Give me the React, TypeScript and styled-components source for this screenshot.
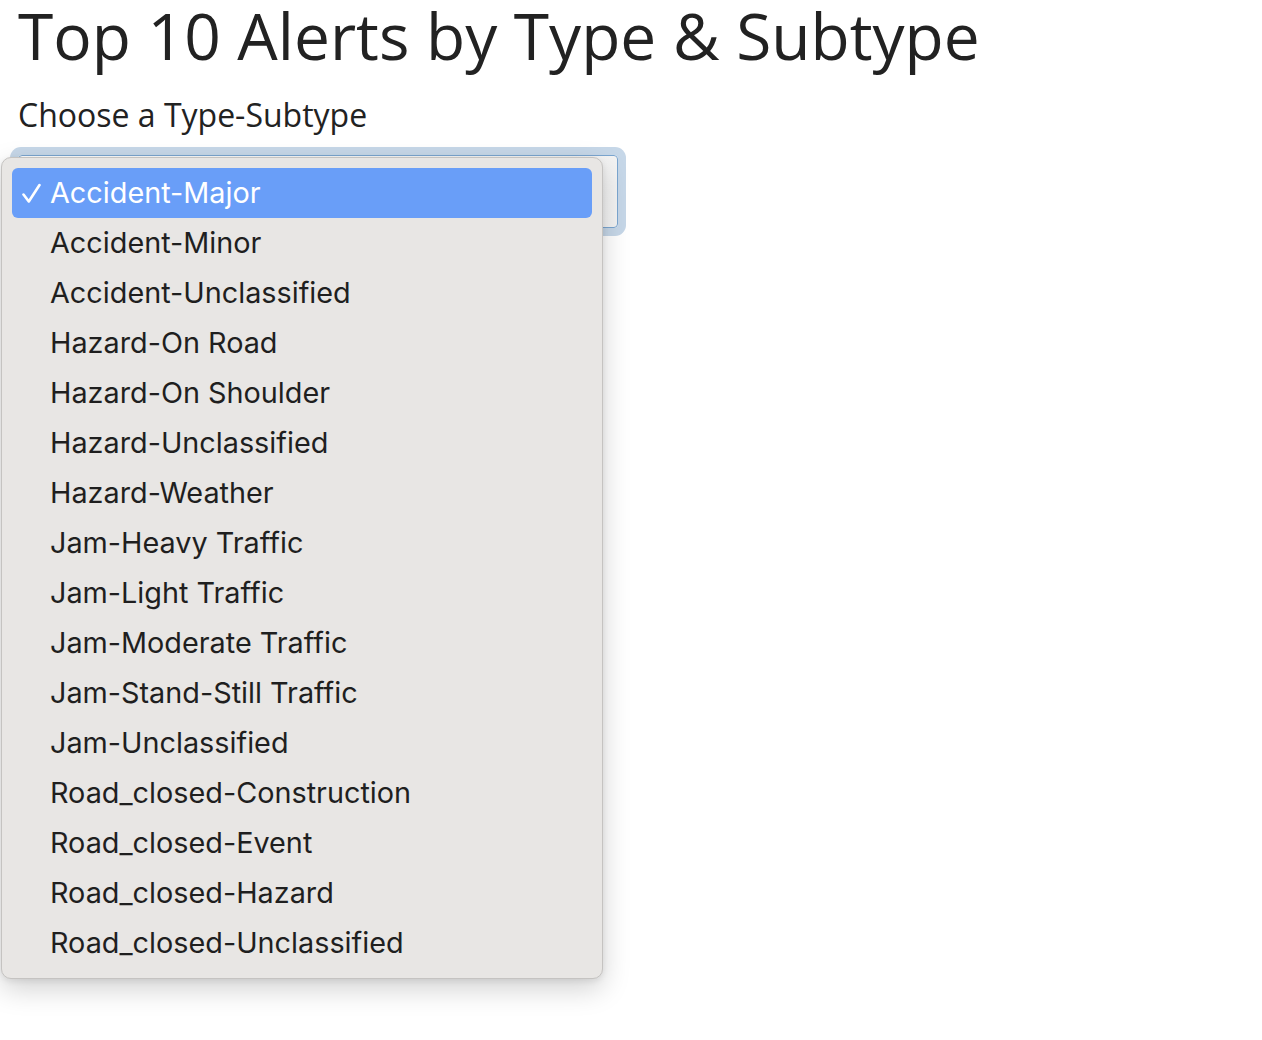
import React from "react";
import styled, { createGlobalStyle } from "styled-components";

const Global = createGlobalStyle`
  html, body { margin: 0; padding: 0; background: #ffffff; }
  html, body, #root { min-height: 100%; }
  body { font-family: "Open Sans", "Noto Sans", sans-serif; color: #222222; }
`;

const Page = styled.div`
  padding-left: 18px;
  min-height: 1040px;
  box-sizing: border-box;
`;

const Title = styled.h1`
  margin: 0;
  font-family: "Open Sans", sans-serif;
  font-weight: 400;
  font-size: 64px;
  line-height: 72px;
  color: #222222;
  white-space: nowrap;
`;

const Label = styled.div`
  margin-top: 23px;
  font-family: "Open Sans", sans-serif;
  font-size: 32px;
  line-height: 40px;
  color: #222222;
`;

const SelectWrap = styled.div`
  position: relative;
  margin-top: 20px;
  width: 600px;
  height: 830px;
`;

const SelectBox = styled.div`
  box-sizing: border-box;
  width: 600px;
  height: 73px;
  border: 1px solid #7ba6d0;
  border-radius: 4px;
  background: linear-gradient(to right, #ffffff, #f3f3f3);
  box-shadow: 0 0 0 8px #c6d7e8;
`;

const Menu = styled.div`
  position: absolute;
  left: -17px;
  top: 2px;
  width: 602px;
  box-sizing: border-box;
  padding: 10px 10px;
  background: #e8e6e4;
  border: 1px solid #c5c3c1;
  border-radius: 10px;
  box-shadow: 0 10px 28px rgba(0, 0, 0, 0.18), 0 2px 6px rgba(0, 0, 0, 0.08);
  font-family: "Inter", "Roboto", sans-serif;
`;

const Item = styled.div<{ $selected?: boolean }>`
  position: relative;
  height: 50px;
  line-height: 50px;
  padding-left: 38px;
  border-radius: 6px;
  font-size: 28.8px;
  color: ${(p) => (p.$selected ? "#ffffff" : "#1f1f1f")};
  background: ${(p) => (p.$selected ? "#699ef8" : "transparent")};
  white-space: nowrap;
`;

const Check = styled.svg`
  position: absolute;
  left: 10px;
  top: 15px;
  width: 19px;
  height: 21px;
`;

const options = [
  "Accident-Major",
  "Accident-Minor",
  "Accident-Unclassified",
  "Hazard-On Road",
  "Hazard-On Shoulder",
  "Hazard-Unclassified",
  "Hazard-Weather",
  "Jam-Heavy Traffic",
  "Jam-Light Traffic",
  "Jam-Moderate Traffic",
  "Jam-Stand-Still Traffic",
  "Jam-Unclassified",
  "Road_closed-Construction",
  "Road_closed-Event",
  "Road_closed-Hazard",
  "Road_closed-Unclassified",
];

export default function App() {
  return (
    <Page>
      <Global />
      <Title>Top 10 Alerts by Type &amp; Subtype</Title>
      <Label>Choose a Type-Subtype</Label>
      <SelectWrap>
        <SelectBox />
        <Menu>
          {options.map((o, i) => (
            <Item key={o} $selected={i === 0}>
              {i === 0 && (
                <Check viewBox="0 0 19 21">
                  <path
                    d="M1.5 11.5 L6.8 18.5 L17.5 2"
                    fill="none"
                    stroke="#ffffff"
                    strokeWidth="2.6"
                    strokeLinecap="round"
                    strokeLinejoin="round"
                  />
                </Check>
              )}
              {o}
            </Item>
          ))}
        </Menu>
      </SelectWrap>
    </Page>
  );
}
